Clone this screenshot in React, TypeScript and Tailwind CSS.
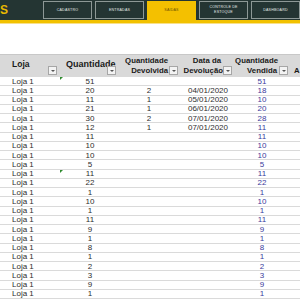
import React from 'react';

const QTD = [51, 20, 11, 21, 30, 12, 11, 10, 10, 5, 11, 22, 1, 10, 1, 11, 9, 1, 8, 1, 2, 3, 9, 1];
const VENDIDA = [51, 18, 10, 20, 28, 11, 11, 10, 10, 5, 11, 22, 1, 10, 1, 11, 9, 1, 8, 1, 2, 3, 9, 1];
const DEVOLVIDA: Record<number, { qtd: number; data: string }> = {
  1: { qtd: 2, data: '04/01/2020' },
  2: { qtd: 1, data: '05/01/2020' },
  3: { qtd: 1, data: '06/01/2020' },
  4: { qtd: 2, data: '07/01/2020' },
  5: { qtd: 1, data: '07/01/2020' },
};
const FLAGGED = [0, 10];

const NAV = [
  { label: ['CADASTRO'], active: false },
  { label: ['ENTRADAS'], active: false },
  { label: ['SAÍDAS'], active: true },
  { label: ['CONTROLE DE', 'ESTOQUE'], active: false },
  { label: ['DASHBOARD'], active: false },
];

const FilterButton = () => (
  <div className="absolute right-[2px] bottom-[2px] w-[9px] h-[9px] bg-[#f3f3f3] border border-[#a6a6a6] flex items-center justify-center">
    <div className="w-0 h-0 border-l-[2px] border-r-[2px] border-t-[2px] border-l-transparent border-r-transparent border-t-[#555]" />
  </div>
);

const App: React.FC = () => {
  return (
    <div className="w-[300px] h-[300px] overflow-hidden bg-white font-['Liberation_Sans',Arial,sans-serif]">
      {/* Top bar */}
      <div className="h-[20px] bg-[#243533] flex items-center">
        <div className="w-[63px] h-full flex items-center">
          <span className="text-[#e9b800] font-bold text-[12px] leading-none">S</span>
        </div>
        <div className="flex gap-[3px] h-full items-stretch">
          {NAV.map((n, i) => (
            <div
              key={i}
              className={
                n.active
                  ? 'w-[49px] mt-[1px] bg-[#f4c000] flex flex-col items-center justify-center text-[#6b5200]'
                  : 'w-[49px] my-[1px] border border-[#8d9896] flex flex-col items-center justify-center text-[#e6ecea]'
              }
            >
              {n.label.map((l, j) => (
                <span key={j} className="text-[3.6px] leading-[5px] tracking-[0.2px]">{l}</span>
              ))}
            </div>
          ))}
        </div>
      </div>
      <div className="h-[3px] bg-[#f2c100]" />
      <div className="h-[1px] bg-[#f8e08a]" />
      <div className="h-[30px]" />

      {/* Table */}
      <div className="grid grid-cols-[59px_59px_62px_54px_56px_1fr] text-[#2e2e2e]">
        {/* header */}
        <div className="relative h-[23px] bg-[#d9d9d9] border-t border-[#c8c8c8] text-[#1a1a1a]">
          <span className="absolute left-[12px] top-[4px] text-[8.5px] font-bold leading-[10px]">Loja</span>
          <FilterButton />
        </div>
        <div className="relative h-[23px] bg-[#d9d9d9] border-t border-[#c8c8c8] overflow-hidden text-[#1a1a1a]">
          <span className="absolute left-[7px] top-[4px] text-[9px] font-bold leading-[10px]">Quantidade</span>
          <FilterButton />
        </div>
        <div className="relative h-[23px] bg-[#d9d9d9] border-t border-[#c8c8c8] flex flex-col items-end pr-[12px] pt-[1px] text-[7.8px] font-bold leading-[10px] text-[#1a1a1a]">
          <span>Quantidade</span>
          <span>Devolvida</span>
          <FilterButton />
        </div>
        <div className="relative h-[23px] bg-[#d9d9d9] border-t border-[#c8c8c8] flex flex-col items-end pr-[11px] pt-[1px] text-[7.8px] font-bold leading-[10px] overflow-hidden text-[#1a1a1a]">
          <span className="pr-[2px]">Data da</span>
          <span className="whitespace-nowrap">Devolução</span>
          <FilterButton />
        </div>
        <div className="relative h-[23px] bg-[#d9d9d9] border-t border-[#c8c8c8] flex flex-col items-end pr-[12px] pt-[1px] text-[7.8px] font-bold leading-[10px] text-[#1a1a1a]">
          <span>Quantidade</span>
          <span className="pr-[1px]">Vendida</span>
          <FilterButton />
        </div>
        <div className="h-[23px] bg-[#d9d9d9] border-t border-[#c8c8c8] pl-[4px] pt-[11px] text-[7.8px] font-bold leading-[10px] text-[#1a1a1a]">
          A
        </div>

        {/* rows */}
        {QTD.map((q, i) => {
          const dev = DEVOLVIDA[i];
          const cell = 'h-[9.25px] border-b border-[#dadada] text-[8px] leading-[9px] flex items-center';
          return (
            <React.Fragment key={i}>
              <div className={`${cell} pl-[12px]`}>Loja 1</div>
              <div className={`${cell} justify-center relative pl-[3px]`}>
                {FLAGGED.includes(i) && (
                  <div className="absolute left-[1px] top-[0px] w-0 h-0 border-t-[3px] border-r-[3px] border-t-[#2e8b2e] border-r-transparent" />
                )}
                {q}
              </div>
              <div className={`${cell} justify-center`}>{dev ? dev.qtd : ''}</div>
              <div className={`${cell} justify-center pl-[2px]`}>{dev ? dev.data : ''}</div>
              <div className={`${cell} justify-center text-[#3b3b9c]`}>{VENDIDA[i]}</div>
              <div className={cell} />
            </React.Fragment>
          );
        })}
      </div>
    </div>
  );
};

export default App;
